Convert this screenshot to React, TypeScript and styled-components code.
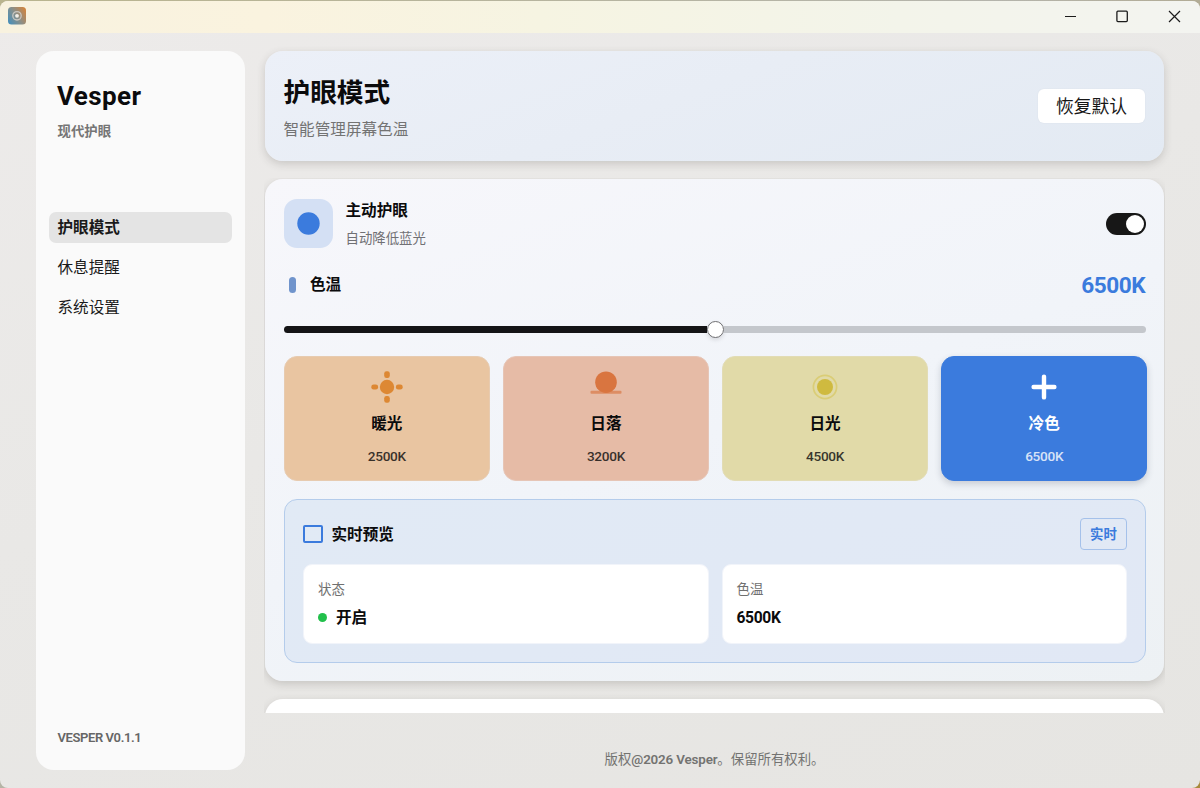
import React from "react";
import styled, { createGlobalStyle, css } from "styled-components";

const GlobalStyle = createGlobalStyle`
  * { box-sizing: border-box; }
  html, body { margin: 0; padding: 0; }
  body {
    width: 1200px;
    height: 788px;
    overflow: hidden;
    background: linear-gradient(135deg, #b9b48e 0%, #b4b4ac 50%, #a88a3c 100%);
    font-family: Roboto, "Noto Sans CJK SC", sans-serif;
    color: #0b0b0c;
  }
  h1, h2, h3, p { margin: 0; }
  button { font: inherit; color: inherit; border: 0; padding: 0; background: none; }
`;

const Window = styled.div`
  display: flex;
  flex-direction: column;
  width: 1200px;
  height: 787px;
  margin-top: 1px;
  border-radius: 8px;
  overflow: hidden;
  background: linear-gradient(160deg, #edebea 0%, #e9e8e6 45%, #e6e5e2 100%);
`;

const TitleBar = styled.header`
  display: flex;
  align-items: center;
  justify-content: space-between;
  flex: none;
  height: 32px;
  padding: 0 19px 2px 8px;
  background: linear-gradient(90deg, #f8f2df 0%, #faf3df 22%, #f6f4e2 45%, #f3f4ea 75%, #f3f4f0 100%);
`;

const WindowControls = styled.div`
  display: flex;
  gap: 39px;
`;

const ControlButton = styled.button`
  display: flex;
  width: 13px;
  height: 13px;
`;

const Body = styled.div`
  display: flex;
  flex: 1;
  min-height: 0;
  gap: 19px;
  padding: 18px 35px 18px 36px;
`;

const Sidebar = styled.aside`
  display: flex;
  flex-direction: column;
  flex: none;
  width: 209px;
  height: 719px;
  padding: 27px 13px 21px;
  border-radius: 18px;
  background: #fafafa;
`;

const Brand = styled.h1`
  padding-left: 8px;
  font-size: 26px;
  line-height: 36px;
  font-weight: 700;
  letter-spacing: 0.4px;
`;

const BrandCaption = styled.p`
  margin-top: 8px;
  padding-left: 8.5px;
  font-size: 13.4px;
  line-height: 20px;
  font-weight: 700;
  color: #757575;
`;

const Nav = styled.nav`
  display: flex;
  flex-direction: column;
  gap: 9px;
  margin-top: 70px;
`;

const NavItem = styled.button<{ $active?: boolean }>`
  height: 31px;
  padding: 2px 8.5px 0;
  border-radius: 7px;
  text-align: left;
  font-size: 15.6px;
  line-height: 29px;
  color: #1a1a1a;
  font-weight: ${(p) => (p.$active ? 700 : 400)};
  background: ${(p) => (p.$active ? "#e4e4e4" : "transparent")};
`;

const Version = styled.p`
  margin-top: auto;
  padding-left: 8.5px;
  font-size: 13px;
  line-height: 22px;
  font-weight: 600;
  letter-spacing: -0.4px;
  color: #666;
`;

const Main = styled.main`
  display: flex;
  flex-direction: column;
  width: 901px;
`;

const cardShadow = css`
  box-shadow: 0 3px 9px rgba(60, 55, 50, 0.19);
`;

const PageHeader = styled.section`
  display: flex;
  align-items: center;
  justify-content: space-between;
  flex: none;
  height: 110px;
  margin: 0 1px;
  padding: 0 19px 0 18.5px;
  border-radius: 18px;
  background: linear-gradient(160deg, #ecf0f8 0%, #e8edf5 45%, #e3eaf3 100%);
  ${cardShadow}
`;

const PageTitle = styled.h2`
  padding-top: 2px;
  font-size: 26.7px;
  line-height: 40px;
  font-weight: 700;
`;

const PageSubtitle = styled.p`
  margin-top: 5px;
  font-size: 15.6px;
  line-height: 24px;
  color: #737373;
`;

const ResetButton = styled.button`
  width: 107px;
  height: 34px;
  padding-top: 1px;
  border-radius: 6px;
  background: #fff;
  font-size: 17.8px;
  line-height: 33px;
  color: #171717;
  box-shadow: 0 0 2px rgba(0, 0, 0, 0.06);
`;

const ScrollArea = styled.div`
  display: flex;
  flex-direction: column;
  gap: 18px;
  flex: none;
  height: 535px;
  margin-top: 17px;
  padding: 1px 1px 0;
  overflow: hidden;
`;

const Card = styled.section`
  flex: none;
  height: 502px;
  padding: 20px 18px 19px 19px;
  border-radius: 18px;
  background: linear-gradient(160deg, #f7f7fb 0%, #f1f4f9 50%, #edf1f4 100%);
  ${cardShadow}
`;

const NextCard = styled.section`
  flex: none;
  height: 120px;
  border-radius: 18px;
  background: #fff;
  ${cardShadow}
`;

const Row = styled.div`
  display: flex;
  align-items: center;
`;

const FeatureIcon = styled.div`
  display: grid;
  place-items: center;
  width: 49px;
  height: 49px;
  border-radius: 13px;
  background: #d4e0f4;
`;

const FeatureText = styled.div`
  flex: 1;
  margin-bottom: -1px;
  padding: 1px 0 0 12.5px;
`;

const FeatureTitle = styled.h3`
  font-size: 15.6px;
  line-height: 23px;
  font-weight: 700;
`;

const FeatureHint = styled.p`
  margin-top: 6px;
  font-size: 13.4px;
  line-height: 20px;
  color: #707074;
`;

const Switch = styled.button`
  display: flex;
  justify-content: flex-end;
  align-items: center;
  width: 40px;
  height: 22px;
  padding: 2px;
  border-radius: 11px;
  background: #171717;
`;

const SwitchKnob = styled.span`
  width: 18px;
  height: 18px;
  border-radius: 50%;
  background: #fff;
`;

const TemperatureRow = styled(Row)`
  height: 30px;
  margin-top: 22px;
  padding-left: 5px;
`;

const Marker = styled.span`
  width: 7px;
  height: 16px;
  margin-right: 14px;
  border-radius: 3.5px;
  background: #7094cc;
`;

const TemperatureLabel = styled.h3`
  flex: 1;
  font-size: 15.6px;
  line-height: 24px;
  font-weight: 700;
`;

const TemperatureValue = styled.span`
  padding-top: 2px;
  font-size: 22.6px;
  line-height: 28px;
  font-weight: 700;
  letter-spacing: -0.5px;
  margin-right: 1px;
  color: #3b7bdd;
`;

const Slider = styled.div`
  display: flex;
  align-items: center;
  height: 17px;
  margin: 20.5px 0 18.5px;
`;

const SliderFill = styled.span`
  width: 422.5px;
  height: 7px;
  border-radius: 4px 0 0 4px;
  background: #141416;
`;

const SliderThumb = styled.span`
  width: 17px;
  height: 17px;
  border: 1px solid #6f6f72;
  border-radius: 50%;
  background: #fff;
  box-shadow: 0 2px 4px rgba(0, 0, 0, 0.12);
`;

const SliderRest = styled.span`
  flex: 1;
  height: 7px;
  border-radius: 0 4px 4px 0;
  background: #c4c7cc;
`;

const Presets = styled.div`
  display: grid;
  grid-template-columns: repeat(4, 1fr);
  gap: 13.5px;
  margin-right: -1px;
`;

const Preset = styled.button<{ $fill: string; $edge: string; $active?: boolean }>`
  display: flex;
  flex-direction: column;
  align-items: center;
  height: 125px;
  padding-top: 14px;
  border: 1px solid ${(p) => p.$edge};
  border-radius: 13px;
  background: ${(p) => p.$fill};
  color: ${(p) => (p.$active ? "#fff" : "#0b0b0c")};
  box-shadow: ${(p) => (p.$active ? "0 3px 7px rgba(40, 50, 70, 0.2)" : "none")};
`;

const PresetName = styled.span`
  margin-top: 9px;
  font-size: 15.6px;
  line-height: 24px;
  font-weight: 700;
`;

const PresetValue = styled.span`
  margin-top: 10px;
  font-size: 13.6px;
  line-height: 20px;
  font-weight: 500;
  letter-spacing: -0.3px;
  opacity: 0.8;
`;

const Preview = styled.div`
  height: 164px;
  margin-top: 18px;
  padding: 18px;
  border: 1px solid #b4cceb;
  border-radius: 13px;
  background: linear-gradient(160deg, #e1eaf5 0%, #e1e8f5 100%);
`;

const PreviewTitle = styled.h3`
  flex: 1;
  padding: 1px 0 0 8.5px;
  font-size: 15.6px;
  line-height: 24px;
  font-weight: 700;
`;

const LiveBadge = styled.span`
  width: 47px;
  height: 32px;
  border: 1px solid #a5c1ea;
  border-radius: 4px;
  text-align: center;
  font-size: 13.4px;
  line-height: 32px;
  font-weight: 700;
  color: #3b7bdd;
`;

const Tiles = styled.div`
  display: grid;
  grid-template-columns: 1fr 1fr;
  gap: 13px;
  margin-top: 14px;
`;

const Tile = styled.div`
  height: 80px;
  padding: 15px 14px;
  border: 1px solid #f1f4fa;
  border-radius: 9px;
  background: #fff;
`;

const TileLabel = styled.p`
  font-size: 13.4px;
  line-height: 20px;
  color: #707070;
`;

const TileValue = styled.p<{ $numeric?: boolean }>`
  display: flex;
  align-items: center;
  margin-top: 6px;
  font-size: 15.6px;
  line-height: 24px;
  font-weight: 700;
  letter-spacing: ${(p) => (p.$numeric ? "-0.35px" : "0")};
`;

const StatusDot = styled.span`
  width: 9px;
  height: 9px;
  margin-right: 9px;
  margin-bottom: 1px;
  border-radius: 50%;
  background: #22c04b;
`;

const Footer = styled.footer`
  margin-top: 36px;
  text-align: center;
  font-size: 13.4px;
  line-height: 22px;
  color: #737371;
`;

const FooterLatin = styled.span`
  font-weight: 600;
  letter-spacing: -0.16px;
`;

const AppLogo = () => (
  <svg width="18" height="18" viewBox="0 0 18 18">
    <defs>
      <linearGradient id="logo" x1="0" y1="0.8" x2="1" y2="0.2">
        <stop offset="0" stopColor="#4a8fb8" />
        <stop offset="0.5" stopColor="#8b8f88" />
        <stop offset="1" stopColor="#cf8440" />
      </linearGradient>
    </defs>
    <rect width="18" height="17.5" rx="3.5" fill="url(#logo)" />
    <circle cx="9" cy="8.8" r="4.2" fill="none" stroke="#c9c6c0" strokeWidth="1.3" />
    <circle cx="9" cy="8.8" r="1.9" fill="#f3efe9" />
  </svg>
);

const WarmIcon = () => (
  <svg width="32" height="32" viewBox="0 0 32 32" fill="#dd8833">
    <circle cx="16" cy="16" r="7.2" />
    <rect x="13.2" y="0.3" width="5.6" height="6.8" rx="2.3" />
    <rect x="13.2" y="24.9" width="5.6" height="6.8" rx="2.3" />
    <rect x="0.3" y="13.5" width="6.8" height="5" rx="2.3" />
    <rect x="24.9" y="13.5" width="6.8" height="5" rx="2.3" />
  </svg>
);

const SunsetIcon = () => (
  <svg width="32" height="32" viewBox="0 0 32 32">
    <circle cx="16" cy="11.2" r="10.8" fill="#d97540" />
    <rect x="0.5" y="19.7" width="31" height="3" rx="1" fill="#d97540" fillOpacity="0.65" />
  </svg>
);

const DaylightIcon = () => (
  <svg width="32" height="32" viewBox="0 0 32 32">
    <circle cx="16" cy="16" r="11.6" fill="none" stroke="#dacd76" strokeWidth="1.7" />
    <circle cx="16" cy="16" r="8" fill="#cfba3f" />
  </svg>
);

const CoolIcon = () => (
  <svg width="32" height="32" viewBox="0 0 32 32" stroke="#fff" strokeWidth="4.4" strokeLinecap="round">
    <path d="M16 5.6v20.8M5.6 16h20.8" />
  </svg>
);

const presets = [
  { name: "暖光", value: "2500K", fill: "#e9c5a1", edge: "#e7cbb0", Icon: WarmIcon },
  { name: "日落", value: "3200K", fill: "#e6bba6", edge: "#e6c5b6", Icon: SunsetIcon },
  { name: "日光", value: "4500K", fill: "#e1daa8", edge: "#e2dcb5", Icon: DaylightIcon },
  { name: "冷色", value: "6500K", fill: "#3b7bdd", edge: "#3b7bdd", Icon: CoolIcon, active: true },
];

export default function App() {
  return (
    <>
      <GlobalStyle />
      <Window>
        <TitleBar>
          <AppLogo />
          <WindowControls>
            <ControlButton aria-label="minimize">
              <svg width="13" height="13" viewBox="0 0 13 13" stroke="#1b1b1b" fill="none">
                <path d="M1 6.5h11" />
              </svg>
            </ControlButton>
            <ControlButton aria-label="maximize">
              <svg width="13" height="13" viewBox="0 0 13 13" stroke="#1b1b1b" fill="none" strokeWidth="1.3">
                <rect x="0.9" y="1.2" width="10.4" height="10.4" rx="1" />
              </svg>
            </ControlButton>
            <ControlButton aria-label="close">
              <svg width="13" height="13" viewBox="0 0 13 13" stroke="#1b1b1b" fill="none" strokeWidth="1.2">
                <path d="M1 1l11 11M12 1L1 12" />
              </svg>
            </ControlButton>
          </WindowControls>
        </TitleBar>
        <Body>
          <Sidebar>
            <Brand>Vesper</Brand>
            <BrandCaption>现代护眼</BrandCaption>
            <Nav>
              <NavItem $active>护眼模式</NavItem>
              <NavItem>休息提醒</NavItem>
              <NavItem>系统设置</NavItem>
            </Nav>
            <Version>VESPER V0.1.1</Version>
          </Sidebar>
          <Main>
            <PageHeader>
              <div>
                <PageTitle>护眼模式</PageTitle>
                <PageSubtitle>智能管理屏幕色温</PageSubtitle>
              </div>
              <ResetButton>恢复默认</ResetButton>
            </PageHeader>
            <ScrollArea>
              <Card>
                <Row>
                  <FeatureIcon>
                    <svg width="23" height="23" viewBox="0 0 23 23">
                      <circle cx="11.5" cy="11.5" r="11.2" fill="#3b7bdd" />
                    </svg>
                  </FeatureIcon>
                  <FeatureText>
                    <FeatureTitle>主动护眼</FeatureTitle>
                    <FeatureHint>自动降低蓝光</FeatureHint>
                  </FeatureText>
                  <Switch role="switch" aria-checked="true">
                    <SwitchKnob />
                  </Switch>
                </Row>
                <TemperatureRow>
                  <Marker />
                  <TemperatureLabel>色温</TemperatureLabel>
                  <TemperatureValue>6500K</TemperatureValue>
                </TemperatureRow>
                <Slider>
                  <SliderFill />
                  <SliderThumb />
                  <SliderRest />
                </Slider>
                <Presets>
                  {presets.map(({ name, value, fill, edge, Icon, active }) => (
                    <Preset key={name} $fill={fill} $edge={edge} $active={active}>
                      <Icon />
                      <PresetName>{name}</PresetName>
                      <PresetValue>{value}</PresetValue>
                    </Preset>
                  ))}
                </Presets>
                <Preview>
                  <Row>
                    <svg width="20" height="18" viewBox="0 0 20 18">
                      <rect x="1" y="1" width="18" height="16" rx="1" fill="none" stroke="#3b7bdd" strokeWidth="2" />
                    </svg>
                    <PreviewTitle>实时预览</PreviewTitle>
                    <LiveBadge>实时</LiveBadge>
                  </Row>
                  <Tiles>
                    <Tile>
                      <TileLabel>状态</TileLabel>
                      <TileValue>
                        <StatusDot />
                        开启
                      </TileValue>
                    </Tile>
                    <Tile>
                      <TileLabel>色温</TileLabel>
                      <TileValue $numeric>6500K</TileValue>
                    </Tile>
                  </Tiles>
                </Preview>
              </Card>
              <NextCard />
            </ScrollArea>
            <Footer>
              版权<FooterLatin>@2026 Vesper</FooterLatin>。保留所有权利。
            </Footer>
          </Main>
        </Body>
      </Window>
    </>
  );
}
